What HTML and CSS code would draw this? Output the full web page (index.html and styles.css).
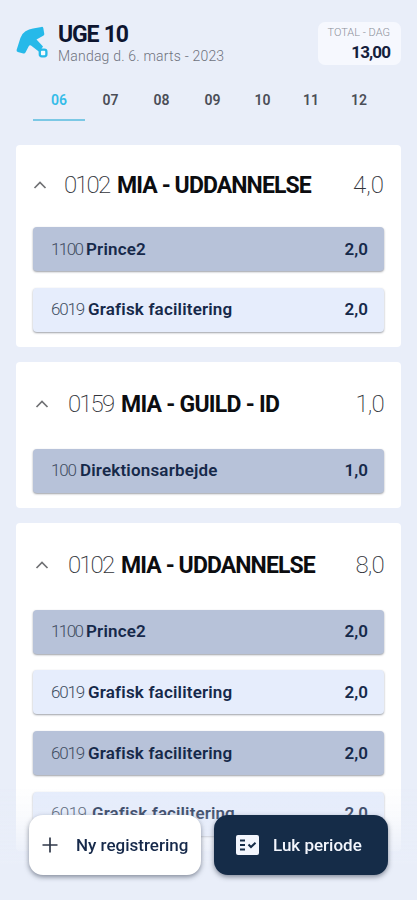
FILE: index.html
```html
<!DOCTYPE html>
<html lang="da">
<head>
    <meta charset="UTF-8">
    <meta name="viewport" content="width=device-width, initial-scale=1.0">
    <title>Tidsregistrering</title>
    <link rel="stylesheet" href="styles.css">
</head>
<body>
    <header class="header">
        <svg class="logo" viewBox="0 0 34 36" width="34" height="36">
            <path d="M9.5 5.2Q13 3.4 17 2.6L25.5.9Q27 .7 27.3 2L28.3 8Q28.4 9.3 27.2 9.8L20.5 13.4 27 20.5 23.4 26 15 19.6Q13.6 18.8 12.6 20.4L9.6 26.3Q8.8 27.8 7.3 27.4L1.8 26Q.3 25.5.6 24L4.4 12Q6.2 7.2 9.5 5.2Z" fill="#26b9e9"/>
            <rect x="23.8" y="23.7" width="6.6" height="6.6" rx="2" fill="#f3fbff" stroke="#26b9e9" stroke-width="2.3"/>
        </svg>
        <div class="heading">
            <div class="week">UGE 10</div>
            <div class="date">Mandag d. 6. marts - 2023</div>
        </div>
        <div class="day-total">
            <div class="day-total-label">TOTAL - DAG</div>
            <div class="day-total-value">13,00</div>
        </div>
    </header>

    <nav class="tabs">
        <div class="tab active">06</div>
        <div class="tab">07</div>
        <div class="tab">08</div>
        <div class="tab">09</div>
        <div class="tab">10</div>
        <div class="tab">11</div>
        <div class="tab">12</div>
    </nav>

    <main class="cards">
        <section class="card first">
            <div class="card-head">
                <svg class="chevron" viewBox="0 0 14 10" width="14" height="10"><path d="M1.5 8 7 2.5 12.5 8"/></svg>
                <span class="number">0102</span>
                <span class="name">MIA - UDDANNELSE</span>
                <span class="sum">4,0</span>
            </div>
            <div class="rows">
                <div class="row dark"><span class="code c1100">1100</span><span class="task prince">Prince2</span><span class="hours">2,0</span></div>
                <div class="row"><span class="code">6019</span><span class="task">Grafisk facilitering</span><span class="hours">2,0</span></div>
            </div>
        </section>

        <section class="card">
            <div class="card-head">
                <svg class="chevron" viewBox="0 0 14 10" width="14" height="10"><path d="M1.5 8 7 2.5 12.5 8"/></svg>
                <span class="number">0159</span>
                <span class="name guild">MIA - GUILD - ID</span>
                <span class="sum">1,0</span>
            </div>
            <div class="rows">
                <div class="row dark"><span class="code c100">100</span><span class="task">Direktionsarbejde</span><span class="hours">1,0</span></div>
            </div>
        </section>

        <section class="card">
            <div class="card-head">
                <svg class="chevron" viewBox="0 0 14 10" width="14" height="10"><path d="M1.5 8 7 2.5 12.5 8"/></svg>
                <span class="number">0102</span>
                <span class="name">MIA - UDDANNELSE</span>
                <span class="sum">8,0</span>
            </div>
            <div class="rows">
                <div class="row dark"><span class="code c1100">1100</span><span class="task prince">Prince2</span><span class="hours">2,0</span></div>
                <div class="row"><span class="code">6019</span><span class="task">Grafisk facilitering</span><span class="hours">2,0</span></div>
                <div class="row dark"><span class="code">6019</span><span class="task">Grafisk facilitering</span><span class="hours">2,0</span></div>
                <div class="row last"><span class="code">6019</span><span class="task">Grafisk facilitering</span><span class="hours">2,0</span></div>
            </div>
        </section>
    </main>

    <footer class="actions">
        <button class="btn btn-light">
            <svg class="plus" viewBox="0 0 16 16" width="16" height="16"><path d="M8 .5V15.5M.5 8H15.5"/></svg>
            <span class="btn-label">Ny registrering</span>
        </button>
        <button class="btn btn-dark">
            <svg viewBox="0 0 24 20" width="24" height="20">
                <rect x="0" y="0" width="23" height="20" rx="2" fill="#f3f6fd"/>
                <path d="M4 5.5H9M4 10H9M4 14.5H9" stroke="#152c48" stroke-width="1.8" fill="none"/>
                <path d="M12.5 9.5 15 12 19.5 7.8" stroke="#152c48" stroke-width="2" fill="none"/>
            </svg>
            <span class="btn-label">Luk periode</span>
        </button>
    </footer>
</body>
</html>
```
FILE: styles.css
```css
* {
    box-sizing: border-box;
}

body {
    margin: 0;
    width: 417px;
    height: 900px;
    overflow: hidden;
    background: #e9eef9;
    color: #14203c;
    font-family: Roboto, "Liberation Sans", sans-serif;
}

/* Header */
.header {
    display: flex;
    height: 82px;
    padding: 22px 16px 0;
}

.logo {
    margin-top: 4px;
}

.heading {
    flex: 1;
    padding-left: 8px;
}

.week {
    font-size: 23px;
    line-height: 25px;
    font-weight: 700;
    letter-spacing: -1.2px;
    word-spacing: 1px;
    color: #0d1530;
}

.date {
    font-size: 14px;
    line-height: 19px;
    font-weight: 300;
    letter-spacing: 0.2px;
    color: #6e727d;
}

.day-total {
    width: 83px;
    height: 43px;
    padding: 4px 11px 0 0;
    border-radius: 7px;
    background: #f6f8fe;
    text-align: right;
}

.day-total-label {
    font-size: 11px;
    line-height: 14px;
    font-weight: 300;
    white-space: nowrap;
    color: #8c909a;
}

.day-total-value {
    font-size: 17px;
    line-height: 24px;
    font-weight: 700;
    letter-spacing: -0.9px;
}

/* Day tabs */
.tabs {
    display: grid;
    grid-template-columns: 52px 51px 51px 51px 49px 48px 48px;
    height: 63px;
    padding-left: 33px;
}

.tab {
    height: 39px;
    text-align: center;
    font-size: 14px;
    line-height: 37px;
    font-weight: 600;
    color: #4b4e57;
}

.tab.active {
    color: #35bce8;
    border-bottom: 2px solid #7bc8e5;
}

/* Project cards */
.cards {
    display: flex;
    flex-direction: column;
    gap: 15px;
    padding: 0 16px;
}

.card {
    padding: 0 17px 15px;
    border-radius: 4px;
    background: #fff;
}

.card-head {
    display: flex;
    align-items: center;
    height: 87px;
    padding: 0 1px 2px 2px;
    font-size: 24px;
    white-space: nowrap;
    color: #0c0d10;
}

.first .card-head {
    height: 82px;
    padding: 0 1px 2px 0;
}

.chevron {
    margin-right: 19px;
    fill: none;
    stroke: #707174;
    stroke-width: 1.7;
}

.first .chevron {
    margin-right: 17px;
}

.number,
.sum {
    font-weight: 200;
    letter-spacing: -1.9px;
    color: #33353b;
}

.number {
    width: 53px;
}

.name {
    font-size: 23px;
    font-weight: 700;
    letter-spacing: -0.9px;
}

.name.guild {
    letter-spacing: -0.75px;
}

.sum {
    margin-left: auto;
    letter-spacing: -0.8px;
    margin-right: -1px;
}

.first .sum {
    letter-spacing: 0;
}

.rows {
    display: flex;
    flex-direction: column;
    gap: 16.7px;
}

.row {
    display: flex;
    align-items: center;
    height: 44px;
    padding: 0 16px 1px 18px;
    border-radius: 4px;
    background: #e6edfc;
    box-shadow: 0 1px 2px rgba(60, 65, 80, 0.5);
    font-size: 17px;
    color: #16294a;
}

.row.dark {
    background: #b7c2d9;
}

.code {
    width: 37px;
    font-weight: 300;
    letter-spacing: -1.2px;
    color: #414d62;
}

.c1100 {
    width: 35px;
    letter-spacing: -1.6px;
}

.c100 {
    width: 29px;
}

.task,
.hours {
    font-weight: 600;
}

.task {
    letter-spacing: 0.18px;
}

.last .code {
    width: 41px;
    letter-spacing: -0.6px;
}

.last .task {
    letter-spacing: 0.1px;
}

.hours {
    margin-left: auto;
}

/* Bottom buttons, lying over the list */
.actions {
    position: fixed;
    left: 0;
    top: 785px;
    width: 417px;
    height: 115px;
    display: flex;
    gap: 13px;
    padding: 30px 29px 0;
    background: linear-gradient(rgba(233, 238, 249, 0), rgba(233, 238, 249, 0.25) 30px, rgba(233, 238, 249, 0.85) 66px, #e9eef9 80px);
}

.btn {
    display: flex;
    align-items: center;
    height: 60px;
    border: 0;
    border-radius: 14px;
    box-shadow: 0 2px 5px rgba(30, 40, 60, 0.5);
    font-family: inherit;
    font-size: 17px;
    font-weight: 500;
    white-space: nowrap;
}

.btn-light {
    width: 172px;
    padding: 0 0 0 13px;
    gap: 18px;
    background: #fff;
    color: #16294a;
}

.btn-dark {
    width: 174px;
    padding: 0 0 0 22px;
    gap: 13px;
    background: #152c48;
    color: #f3f6fd;
}

.plus {
    fill: none;
    stroke: #303949;
    stroke-width: 1.7;
}
```
